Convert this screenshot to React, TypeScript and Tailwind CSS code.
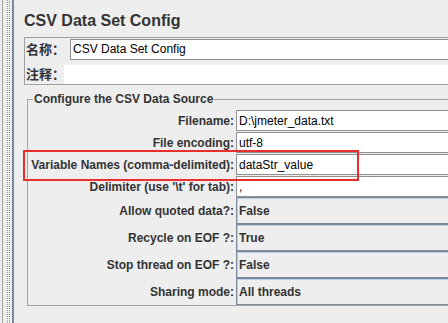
import React from 'react';

const textRows = [
    { label: 'Filename:', value: 'D:\\jmeter_data.txt', h: 'h-[22px]' },
    { label: 'File encoding:', value: 'utf-8', h: 'h-[22px]' },
    { label: 'Variable Names (comma-delimited):', value: 'dataStr_value', h: 'h-[22px]' },
    { label: "Delimiter (use '\\t' for tab):", value: ',', h: 'h-[21px]' },
];

const comboRows = [
    { label: 'Allow quoted data?:', value: 'False' },
    { label: 'Recycle on EOF ?:', value: 'True' },
    { label: 'Stop thread on EOF ?:', value: 'False' },
    { label: 'Sharing mode:', value: 'All threads' },
];

function Splitter() {
    return (
        <div className="flex h-full w-[14px] shrink-0">
            <div className="w-[2px] bg-[#eeeeee]" />
            <div className="w-[1px] bg-[#a6a6a6]" />
            <div className="w-[4px] bg-[#eeeeee]" />
            <div className="w-[1px] border-l border-dotted border-[#9a9a9a]" />
            <div className="w-[1px] bg-[#eeeeee]" />
            <div className="mt-[1px] w-[1px] border-l border-dotted border-[#9a9a9a]" />
            <div className="w-[2px] bg-[#eeeeee]" />
            <div className="w-[2px] bg-[#7b8b9b]" />
        </div>
    );
}

export default function App() {
    return (
        <div className="relative flex h-[323px] w-[448px] overflow-hidden bg-[#eeeeee] font-['Liberation_Sans','Noto_Sans_CJK_SC',sans-serif] text-[#333333]">
            <Splitter />
            <div className="min-w-0 flex-1 pl-[10px] pt-[12px]">
                <h1 className="h-[18px] whitespace-nowrap text-[16px] font-bold leading-[18px]">
                    CSV Data Set Config
                </h1>

                {/* name / comment panel */}
                <div className="mt-[7px] w-[600px] border-y border-l border-[#a0a0a0] pt-[1px]">
                    <div className="flex h-[21px]">
                        <div className="flex w-[45px] shrink-0 items-center whitespace-nowrap pl-[1px] text-[13px] font-bold leading-[21px]">
                            名称：
                        </div>
                        <div className="flex flex-1 items-center border border-[#8f8f8f] bg-white pl-[2px] text-[12px] leading-[19px] text-black">
                            CSV Data Set Config
                        </div>
                    </div>
                    <div className="mt-[5px] flex h-[19px]">
                        <div className="flex w-[39px] shrink-0 items-center whitespace-nowrap pl-[1px] text-[13px] font-bold leading-[19px]">
                            注释：
                        </div>
                        <div className="flex-1 bg-white" />
                    </div>
                </div>

                {/* CSV data source */}
                <div className="relative ml-[3px] mt-[14px] w-[600px] border border-[#a3a3a3] pt-[10px]">
                    <div className="absolute left-[5px] top-[-8px] whitespace-nowrap bg-[#eeeeee] px-[1px] text-[12px] font-bold leading-[14px]">
                        Configure the CSV Data Source
                    </div>
                    {textRows.map((row) => (
                        <div key={row.label} className={`flex ${row.h}`}>
                            <div className="flex w-[208px] items-center justify-end whitespace-nowrap pr-[2px] text-[12px] font-bold">
                                {row.label}
                            </div>
                            <div className="flex h-[21px] flex-1 items-center border border-[#8f8f8f] bg-white pl-[2px] text-[12px] text-black">
                                {row.value}
                            </div>
                        </div>
                    ))}
                    {comboRows.map((row) => (
                        <div key={row.label} className="flex h-[27px]">
                            <div className="flex w-[208px] items-center justify-end whitespace-nowrap pr-[2px] text-[12px] font-bold">
                                {row.label}
                            </div>
                            <div className="flex flex-1 items-center border border-[#7a8a99] pl-[2px] text-[12px] font-bold shadow-[inset_1px_1px_0_#b8cfe5]">
                                {row.value}
                            </div>
                        </div>
                    ))}
                </div>
            </div>

            {/* highlight around the variable names row */}
            <div className="absolute left-[23px] top-[150px] h-[31px] w-[336px] border-2 border-[#ea2e2e]" />
        </div>
    );
}
